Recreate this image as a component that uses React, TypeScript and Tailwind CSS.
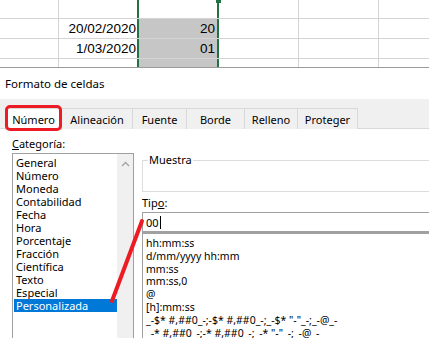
export default function App() {
  const cats = [
    "General",
    "Número",
    "Moneda",
    "Contabilidad",
    "Fecha",
    "Hora",
    "Porcentaje",
    "Fracción",
    "Científica",
    "Texto",
    "Especial",
    "Personalizada",
  ];
  const types = [
    "hh:mm:ss",
    "d/mm/yyyy hh:mm",
    "mm:ss",
    "mm:ss,0",
    "@",
    "[h]:mm:ss",
    '_-$* #,##0_-;-$* #,##0_-;_-$* "-"_-;_-@_-',
    '_-* #,##0_-;-* #,##0_-;_-* "-"_-;_-@_-',
  ];
  const tabs = [
    { t: "Número", w: "w-[57px]", sel: true },
    { t: "Alineación", w: "w-[71px]", sel: false },
    { t: "Fuente", w: "w-[54px]", sel: false },
    { t: "Borde", w: "w-[58px]", sel: false },
    { t: "Relleno", w: "w-[53px]", sel: false },
    { t: "Proteger", w: "w-[60px]", sel: false },
  ];

  const sheetRows = [
    { h: "h-[19px]", a: "", b: "", sel: false },
    { h: "h-[20px]", a: "20/02/2020", b: "20", sel: true },
    { h: "h-[20px]", a: "1/03/2020", b: "01", sel: true },
    { h: "h-[8px]", a: "", b: "", sel: true },
  ];

  return (
    <div className="relative w-[429px] h-[338px] overflow-hidden bg-white font-['Noto_Sans',sans-serif] text-black">
      {/* Spreadsheet */}
      <div className="flex flex-col font-['Liberation_Sans',sans-serif] text-[13.5px]">
        {sheetRows.map((r, i) => (
          <div key={i} className={`flex ${r.h} ${i < 3 ? "border-b border-[#d4d4d4]" : ""}`}>
            <div className="w-[59px] shrink-0 border-r border-[#d4d4d4]" />
            <div className="w-[78px] shrink-0 flex items-center justify-end pr-[1px] leading-none">
              {r.a}
            </div>
            <div
              className={`w-[82px] shrink-0 border-x-2 border-[#217346] flex items-center justify-end pr-[2px] leading-none ${
                r.sel ? "bg-[#c6c6c6]" : "bg-white"
              }`}
            >
              {r.b}
            </div>
            <div className="w-[80px] shrink-0 border-r border-[#d4d4d4]" />
            <div className="w-[80px] shrink-0 border-r border-[#d4d4d4]" />
            <div className="flex-1" />
          </div>
        ))}
        <div className="h-[1px] bg-[#9a9a9a]" />
      </div>
      <div className="absolute left-[216px] top-0 w-[5px] h-[3px] bg-[#217346]" />

      {/* Dialog */}
      <div className="flex flex-col text-[11px]">
        <div className="h-[31px] flex items-center pl-[5px] leading-none text-[11.5px]">Formato de celdas</div>
        <div className="h-[9px] bg-[#f0f0f0]" />
        <div className="flex h-[21px] bg-[#f0f0f0] border-b border-[#d9d9d9] pl-[5px]">
          {tabs.map((t) => (
            <div
              key={t.t}
              className={`${t.w} shrink-0 h-[21px] flex items-center justify-center border-t border-r border-[#d9d9d9] leading-none ${
                t.sel ? "bg-white border-l h-[22px]" : "bg-[#f0f0f0]"
              }`}
            >
              {t.t}
            </div>
          ))}
        </div>

        <div className="flex pl-[12px]">
          {/* Left column */}
          <div className="w-[122px] shrink-0 flex flex-col">
            <div className="h-[24px] pt-[8px] leading-[13px]">
              <span className="underline underline-offset-1">C</span>ategoría:
            </div>
            <div className="h-[200px] border border-[#a0a0a0] flex">
              <div className="flex-1 flex flex-col pt-[2px] pl-[1px]">
                {cats.map((c) => (
                  <div
                    key={c}
                    className={`h-[13px] leading-[13px] pl-[2px] ${
                      c === "Personalizada" ? "bg-[#0078d7] text-white" : ""
                    }`}
                  >
                    {c}
                  </div>
                ))}
              </div>
              <div className="w-[16px] shrink-0 bg-[#f0f0f0] flex justify-center pt-[7px]">
                <svg width="9" height="6" viewBox="0 0 9 6">
                  <path d="M1 5 L4.5 1.5 L8 5" fill="none" stroke="#a3a3a3" strokeWidth="1.3" />
                </svg>
              </div>
            </div>
          </div>

          {/* Right column */}
          <div className="flex-1 pl-[8px] flex flex-col">
            <div className="mt-[31px] h-[32px] border border-[#dcdcdc] relative -mr-[10px]">
              <span className="absolute left-[5px] -top-[8px] bg-white px-[1px] leading-[14px]">Muestra</span>
            </div>
            <div className="h-[20px] pt-[4px] leading-[14px]">
              Tip<span className="underline underline-offset-1">o</span>:
            </div>
            <div className="h-[20px] border border-[#a0a0a0] flex items-center pl-[3px] -mr-[10px] leading-none">
              00<span className="inline-block w-px h-[13px] bg-black ml-[1px]" />
            </div>
            <div className="h-[120px] border border-[#a0a0a0] -mr-[10px] pt-[3px] pl-[3px] text-[10.5px] border-t-2">
              {types.map((t) => (
                <div key={t} className="h-[12.8px] leading-[12.8px] whitespace-nowrap">
                  {t}
                </div>
              ))}
            </div>
          </div>
        </div>
      </div>

      {/* Annotations */}
      <div className="absolute left-[5px] top-[105px] w-[57px] h-[26px] border-[3px] border-[#ed1c24] rounded-[5px]" />
      <svg className="absolute left-0 top-0 pointer-events-none" width="429" height="338">
        <line x1="142" y1="221" x2="112" y2="301" stroke="#ed1c24" strokeWidth="4" strokeLinecap="round" />
      </svg>
    </div>
  );
}
